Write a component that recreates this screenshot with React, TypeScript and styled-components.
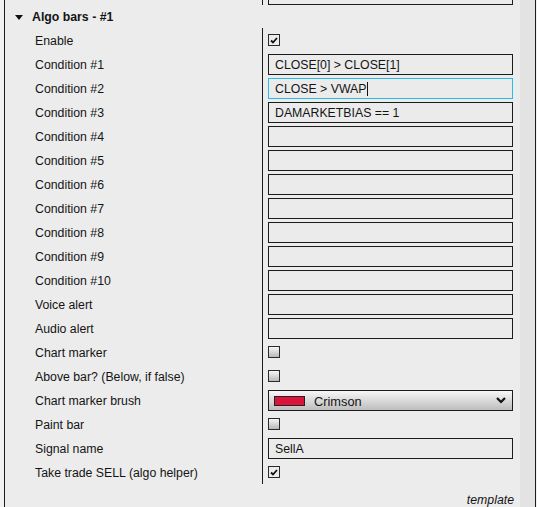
import styled, { createGlobalStyle, css } from 'styled-components';

const GlobalStyle = createGlobalStyle`
  html, body {
    margin: 0;
    padding: 0;
    background: #f1f1f1;
    font-family: "Liberation Sans", Arial, sans-serif;
    font-size: 12.3px;
    color: #141414;
  }
`;

const Panel = styled.div`
  display: flex;
  margin-left: 4px;
  width: 530px;
  height: 507px;
  border-left: 1px solid #1c1c1c;
  border-right: 1px solid #1c1c1c;
  background: #ececec;
  overflow: hidden;
`;

const Main = styled.div`
  display: flex;
  flex-direction: column;
  width: 515px;
`;

const Gutter = styled.div`
  width: 15px;
  background: #e3e3e3;
`;

const Row = styled.div<{ $h?: number }>`
  display: grid;
  grid-template-columns: 257px 1fr;
  height: ${(p) => p.$h ?? 24}px;
`;

const Label = styled.div`
  display: flex;
  align-items: center;
  padding: 2px 0 0 30px;
  white-space: nowrap;
`;

const Value = styled.div`
  display: flex;
  align-items: center;
  padding: 0 7px 0 5px;
  border-left: 1px solid #1c1c1c;
`;

const StubBox = styled.div`
  align-self: flex-start;
  margin-top: -10px;
  width: 245px;
  height: 15px;
  box-sizing: border-box;
  border: 1px solid #1c1c1c;
`;

const Header = styled.div`
  display: flex;
  align-items: center;
  gap: 9px;
  height: 23px;
  padding-left: 10px;
  font-weight: bold;
`;

const Triangle = styled.span`
  width: 0;
  height: 0;
  border-left: 4.5px solid transparent;
  border-right: 4.5px solid transparent;
  border-top: 5px solid #111;
  margin-top: 1px;
`;

const TextBox = styled.div<{ $focused?: boolean }>`
  display: flex;
  align-items: center;
  align-self: flex-start;
  margin-top: 2px;
  box-sizing: border-box;
  width: 245px;
  height: 21px;
  padding: 1px 0 0 6px;
  background: #ebebeb;
  border: 1px solid ${(p) => (p.$focused ? '#27bde8' : '#1c1c1c')};
  white-space: nowrap;
`;

const Caret = styled.span`
  display: inline-block;
  width: 1px;
  height: 14px;
  margin-left: 1px;
  background: #111;
`;

const Check = styled.div<{ $checked?: boolean }>`
  display: flex;
  align-items: center;
  justify-content: center;
  box-sizing: border-box;
  width: 12px;
  height: 12px;
  border: 1px solid #2a2a2a;
  ${(p) =>
    p.$checked
      ? css`
          background: #ececec;
        `
      : css`
          background: linear-gradient(#f6f6f6, #b9b9b9);
        `}
`;

const Select = styled.div`
  display: flex;
  align-items: center;
  align-self: flex-start;
  margin-top: 2px;
  box-sizing: border-box;
  width: 245px;
  height: 21px;
  padding: 0 6px 0 5px;
  border: 1px solid #1c1c1c;
  background: linear-gradient(#f7f7f7, #bdbdbd);
`;

const Swatch = styled.span<{ $color: string }>`
  width: 31px;
  height: 10px;
  box-sizing: border-box;
  border: 1px solid #222;
  background: ${(p) => p.$color};
  margin-right: 9px;
`;

const SelectText = styled.span`
  flex: 1;
  padding-top: 1px;
  font-size: 12.8px;
`;

const Footer = styled.div`
  display: flex;
  justify-content: flex-end;
  align-items: flex-end;
  flex: 1;
  padding: 0 6px 0 0;
  font-style: italic;
`;

const CheckMark = () => (
  <svg width="8" height="7" viewBox="0 0 8 7">
    <path d="M1 3.5 L3 5.5 L7 1" fill="none" stroke="#111" strokeWidth="1.8" />
  </svg>
);

const Chevron = () => (
  <svg width="10" height="7" viewBox="0 0 10 7">
    <path d="M1 1 L5 5 L9 1" fill="none" stroke="#111" strokeWidth="2.2" />
  </svg>
);

type Prop =
  | { label: string; kind: 'text'; value?: string; focused?: boolean }
  | { label: string; kind: 'check'; checked: boolean }
  | { label: string; kind: 'brush'; color: string; name: string };

const props: Prop[] = [
  { label: 'Enable', kind: 'check', checked: true },
  { label: 'Condition #1', kind: 'text', value: 'CLOSE[0] > CLOSE[1]' },
  { label: 'Condition #2', kind: 'text', value: 'CLOSE > VWAP', focused: true },
  { label: 'Condition #3', kind: 'text', value: 'DAMARKETBIAS == 1' },
  { label: 'Condition #4', kind: 'text' },
  { label: 'Condition #5', kind: 'text' },
  { label: 'Condition #6', kind: 'text' },
  { label: 'Condition #7', kind: 'text' },
  { label: 'Condition #8', kind: 'text' },
  { label: 'Condition #9', kind: 'text' },
  { label: 'Condition #10', kind: 'text' },
  { label: 'Voice alert', kind: 'text' },
  { label: 'Audio alert', kind: 'text' },
  { label: 'Chart marker', kind: 'check', checked: false },
  { label: 'Above bar? (Below, if false)', kind: 'check', checked: false },
  { label: 'Chart marker brush', kind: 'brush', color: '#dc143c', name: 'Crimson' },
  { label: 'Paint bar', kind: 'check', checked: false },
  { label: 'Signal name', kind: 'text', value: 'SellA' },
  { label: 'Take trade SELL (algo helper)', kind: 'check', checked: true },
];

const Editor = ({ p }: { p: Prop }) => {
  if (p.kind === 'check') return <Check $checked={p.checked}>{p.checked && <CheckMark />}</Check>;
  if (p.kind === 'brush')
    return (
      <Select>
        <Swatch $color={p.color} />
        <SelectText>{p.name}</SelectText>
        <Chevron />
      </Select>
    );
  return (
    <TextBox $focused={p.focused}>
      {p.value}
      {p.focused && <Caret />}
    </TextBox>
  );
};

export default function App() {
  return (
    <>
      <GlobalStyle />
      <Panel>
        <Main>
          <Row $h={5}>
            <Label />
            <Value>
              <StubBox />
            </Value>
          </Row>
          <Header>
            <Triangle />
            Algo bars - #1
          </Header>
          {props.map((p) => (
            <Row key={p.label}>
              <Label>{p.label}</Label>
              <Value>
                <Editor p={p} />
              </Value>
            </Row>
          ))}
          <Footer>template</Footer>
        </Main>
        <Gutter />
      </Panel>
    </>
  );
}
